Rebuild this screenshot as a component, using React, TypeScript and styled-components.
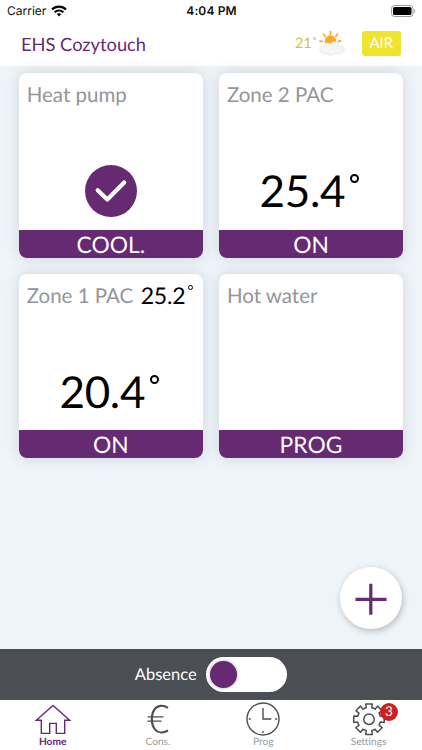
import React from "react";
import styled, { createGlobalStyle } from "styled-components";

const purple = "#662a73";
const slate = "#4b4e53";

const GlobalStyle = createGlobalStyle`
  * { box-sizing: border-box; }
  body {
    margin: 0;
    background: #fff;
    font-family: Lato, "Open Sans", sans-serif;
    text-rendering: geometricPrecision;
  }
`;

const Screen = styled.div`
  width: 422px;
  height: 750px;
  display: flex;
  flex-direction: column;
  overflow: hidden;
  background: #fff;
`;

const StatusBar = styled.div`
  height: 22px;
  flex: none;
  display: grid;
  grid-template-columns: 1fr auto 1fr;
  align-items: center;
  padding: 0 6px 0 7px;
  font-family: Inter, sans-serif;
  font-size: 12px;
  line-height: 22px;
  color: #111;
`;

const Carrier = styled.div`
  display: flex;
  align-items: center;
  gap: 5px;
  letter-spacing: 0;
`;

const Clock = styled.div`
  font-weight: 600;
  letter-spacing: 0.12px;
`;

const BatterySlot = styled.div`
  display: flex;
  justify-content: flex-end;
`;

const Header = styled.header`
  height: 43.5px;
  flex: none;
  display: flex;
  align-items: center;
  padding: 0 21px;
`;

const Title = styled.h1`
  margin: 0;
  flex: 1;
  font-size: 18.3px;
  font-weight: 400;
  line-height: 22px;
  color: ${purple};
`;

const Outdoor = styled.div`
  display: flex;
  align-items: center;
  font-size: 14.5px;
  color: #d9bd3c;
`;

const AirBadge = styled.div`
  width: 39.5px;
  height: 25px;
  margin-left: 16px;
  border-radius: 3px;
  background: #f1e42f;
  color: #fff;
  font-size: 14.8px;
  line-height: 25px;
  text-align: center;
`;

const Main = styled.main`
  position: relative;
  height: 583.5px;
  flex: none;
  padding: 7.8px 19px 0 18.7px;
  background: #eff4f8;
`;

const Grid = styled.div`
  display: grid;
  grid-template-columns: repeat(2, 184.2px);
  grid-auto-rows: 184.6px;
  gap: 16px;
`;

const Card = styled.section`
  display: flex;
  flex-direction: column;
  border-radius: 8px;
  overflow: hidden;
  background: #fff;
  box-shadow: 0 0 14px rgba(70, 90, 105, 0.2);
`;

const CardHead = styled.div`
  display: flex;
  justify-content: space-between;
  height: 44px;
  padding: 9px 10px 0 8px;
  font-size: 20.5px;
  line-height: 26px;
  color: #929599;
  white-space: nowrap;
`;

const SmallReading = styled.span`
  display: flex;
  margin-top: -1px;
  font-size: 23px;
  letter-spacing: -0.2px;
  color: #000;
`;

const CardBody = styled.div`
  flex: 1;
  display: flex;
  justify-content: center;
`;

const Reading = styled.div`
  display: flex;
  padding: 47px 3.5px 0 0;
  font-size: 44px;
  line-height: 54px;
  letter-spacing: -0.3px;
  color: #000;
`;

const Degree = styled.i<{ $size: number; $top: number; $stroke: number }>`
  width: ${(p) => p.$size}px;
  height: ${(p) => p.$size}px;
  margin: ${(p) => p.$top}px 0 0 ${(p) => p.$size / 2}px;
  border: ${(p) => p.$stroke}px solid currentColor;
  border-radius: 50%;
`;

const CheckCircle = styled.div`
  width: 52px;
  height: 52px;
  margin-top: 47.5px;
  border-radius: 50%;
  background: ${purple};
`;

const CardMode = styled.div`
  height: 28.4px;
  background: ${purple};
  color: #fff;
  font-size: 22.8px;
  line-height: 28.4px;
  text-align: center;
`;

const AddButton = styled.button`
  position: absolute;
  right: 20.5px;
  bottom: 20.5px;
  width: 61.5px;
  height: 61.5px;
  padding: 0;
  border: 0;
  border-radius: 50%;
  background: #fff;
  box-shadow: 1px 2px 6px rgba(50, 60, 70, 0.32);
`;

const AbsenceBar = styled.div`
  height: 50.7px;
  flex: none;
  display: flex;
  align-items: center;
  justify-content: center;
  gap: 9px;
  background: ${slate};
  color: #fff;
  font-size: 16.5px;
`;

const Toggle = styled.div`
  display: flex;
  align-items: center;
  width: 81.5px;
  height: 35px;
  padding-left: 4px;
  border-radius: 18px;
  background: #fff;
`;

const Knob = styled.div`
  width: 27px;
  height: 27px;
  border-radius: 50%;
  background: ${purple};
  box-shadow: 0 0 3px rgba(102, 42, 115, 0.5);
`;

const Tabs = styled.nav`
  flex: 1;
  display: grid;
  grid-template-columns: repeat(4, 105.3px);
`;

const Tab = styled.div<{ $active?: boolean }>`
  position: relative;
  display: flex;
  flex-direction: column;
  align-items: center;
  font-size: 10.2px;
  line-height: 12px;
  font-weight: ${(p) => (p.$active ? 700 : 400)};
  color: ${(p) => (p.$active ? purple : "#999b9e")};
  svg { display: block; }
`;

const Badge = styled.span`
  position: absolute;
  left: 64px;
  top: 3px;
  width: 18px;
  height: 18px;
  border-radius: 50%;
  background: #ce211f;
  color: #fff;
  font-size: 13.5px;
  line-height: 17.5px;
  text-align: center;
`;

const Wifi = () => (
  <svg width="16" height="12" viewBox="0 0 16 12" fill="none" stroke="#000" strokeWidth="2.1">
    <path d="M1 4.6C5 .6 11 .6 15 4.6" />
    <path d="M3.6 7.3c2.6-2.5 6.2-2.5 8.8 0" />
    <path d="M5.7 9.1c1.4-1.3 3.2-1.3 4.6 0L8 11.4z" fill="#000" stroke="none" />
  </svg>
);

const Battery = () => (
  <svg width="25" height="12" viewBox="0 0 25 12">
    <rect x=".5" y=".5" width="21.5" height="11" rx="3" fill="none" stroke="#999" />
    <rect x="2" y="2" width="18.5" height="8" rx="1.6" fill="#000" />
    <path d="M23.3 4v4c1.4-.5 1.4-3.5 0-4z" fill="#999" />
  </svg>
);

const Weather = () => (
  <svg width="28" height="27" viewBox="0 0 28 27">
    <g stroke="#f8a928" strokeWidth="1.7" strokeLinecap="round">
      <path d="M12.5 1.5v3M5.5 4.2l1.7 2.2M19.5 4.2l-1.7 2.2M2 11.2l2.5.3M20.3 11.3l2.2-.4" />
    </g>
    <circle cx="12.5" cy="11" r="5.7" fill="#f8a928" />
    <path
      d="M5.7 23.6c-5-.6-5.2-6.5-.6-7.2 1-3.7 5.3-4 7.2-2.5 2.8-3.8 8.6-2.3 9.2 1.6 5.4.2 6.6 6.8 1.4 7.9-2 .5-3.8.2-4.9-.3-2.6 2.7-7.5 2.8-9.4.5-.9.3-2 .2-2.9 0z"
      fill="#f5f5f5"
      stroke="#dfdfdf"
      strokeWidth=".6"
    />
  </svg>
);

const Check = () => (
  <svg width="52" height="52" viewBox="0 0 52 52" fill="none" stroke="#fff" strokeWidth="4.2" strokeLinecap="round" strokeLinejoin="round">
    <path d="M12.7 25.2 22.3 34.6 39.2 17.6" />
  </svg>
);

const Plus = () => (
  <svg width="61.5" height="61.5" viewBox="0 0 61.5 61.5" stroke={purple} strokeWidth="3.2">
    <path d="M15.5 32.3h31M30.8 16.8v31" />
  </svg>
);

const HomeIcon = () => (
  <svg width="38" height="36" viewBox="0 0 38 36" fill="none" stroke={purple} strokeWidth="1.4">
    <path d="M19 5.5 2.3 20.2h5v13.2h8.4V23.4h6.6v10h8.4V20.2h5z" />
  </svg>
);

const EuroIcon = () => (
  <svg width="38" height="36" viewBox="0 0 38 36" fill="none" stroke={slate}>
    <path d="M29 7.8C24 4.7 18.5 5.2 15.3 9.6 12 14.3 12 23.7 15.3 28.5 18.5 33 24 33.5 29 30.5" strokeWidth="2.1" />
    <path d="M8.5 16.8h16M8.5 21.2h14" strokeWidth="1.3" />
  </svg>
);

const ClockIcon = () => (
  <svg width="38" height="36" viewBox="0 0 38 36" fill="none" stroke={slate} strokeWidth="1.4">
    <circle cx="19" cy="19" r="16" />
    <path d="M19 8v11h8.3M4.8 19h2M31.2 19h2M19 31v2" />
  </svg>
);

const polar = (radius: number, degrees: number) => {
  const a = (degrees * Math.PI) / 180;
  return `${(19 + radius * Math.sin(a)).toFixed(2)} ${(19.2 - radius * Math.cos(a)).toFixed(2)}`;
};

const gearPath =
  Array.from({ length: 8 }, (_, i) => {
    const a = i * 45;
    const start = `${i ? "L" : "M"}${polar(11.7, a - 14)}`;
    return `${start}L${polar(15.6, a - 12)}L${polar(15.6, a + 12)}L${polar(11.7, a + 14)}A11.7 11.7 0 0 1 ${polar(11.7, a + 31)}`;
  }).join("") + "Z";

const GearIcon = () => (
  <svg width="38" height="36" viewBox="0 0 38 36" fill="none" stroke={slate} strokeWidth="1.5" strokeLinejoin="round">
    <path d={gearPath} />
    <circle cx="19" cy="19.2" r="5.2" />
  </svg>
);

type Zone = { name: string; mode: string; reading?: string; small?: string; check?: boolean };

const zones: Zone[] = [
  { name: "Heat pump", mode: "COOL.", check: true },
  { name: "Zone 2 PAC", mode: "ON", reading: "25.4" },
  { name: "Zone 1 PAC", mode: "ON", reading: "20.4", small: "25.2" },
  { name: "Hot water", mode: "PROG" },
];

export default function App() {
  return (
    <>
      <GlobalStyle />
      <Screen>
        <StatusBar>
          <Carrier>Carrier <Wifi /></Carrier>
          <Clock>4:04 PM</Clock>
          <BatterySlot><Battery /></BatterySlot>
        </StatusBar>
        <Header>
          <Title>EHS Cozytouch</Title>
          <Outdoor>21˚<Weather /></Outdoor>
          <AirBadge>AIR</AirBadge>
        </Header>
        <Main>
          <Grid>
            {zones.map((z) => (
              <Card key={z.name}>
                <CardHead>
                  {z.name}
                  {z.small && (
                    <SmallReading>{z.small}<Degree $size={5} $top={3.5} $stroke={1.2} /></SmallReading>
                  )}
                </CardHead>
                <CardBody>
                  {z.check && <CheckCircle><Check /></CheckCircle>}
                  {z.reading && (
                    <Reading>{z.reading}<Degree $size={9} $top={10} $stroke={2} /></Reading>
                  )}
                </CardBody>
                <CardMode>{z.mode}</CardMode>
              </Card>
            ))}
          </Grid>
          <AddButton aria-label="Add"><Plus /></AddButton>
        </Main>
        <AbsenceBar>
          Absence
          <Toggle><Knob /></Toggle>
        </AbsenceBar>
        <Tabs>
          <Tab $active><HomeIcon />Home</Tab>
          <Tab><EuroIcon />Cons.</Tab>
          <Tab><ClockIcon />Prog</Tab>
          <Tab><GearIcon />Settings<Badge>3</Badge></Tab>
        </Tabs>
      </Screen>
    </>
  );
}
